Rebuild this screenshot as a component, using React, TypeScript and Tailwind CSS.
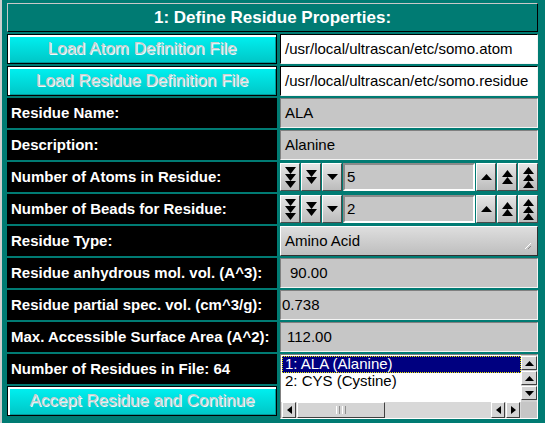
import React from 'react';

const font = { fontFamily: '"Liberation Sans", Arial, sans-serif' };

const Tri: React.FC<{ up?: boolean; w?: number; h?: number }> = ({ up, w = 10, h = 6 }) => (
  <svg width={w} height={h} className="block">
    <polygon points={up ? `0,${h} ${w / 2},0 ${w},${h}` : `0,0 ${w},0 ${w / 2},${h}`} fill="black" />
  </svg>
);

const SideTri: React.FC<{ left?: boolean }> = ({ left }) => (
  <svg width="5" height="8" className="block">
    <polygon points={left ? '5,0 0,4 5,8' : '0,0 5,4 0,8'} fill="black" />
  </svg>
);

const CyanButton: React.FC<{ label: string }> = ({ label }) => (
  <button className="h-full w-full border border-black bg-gradient-to-b from-[#00f2f2] to-[#00c6c6] shadow-[inset_2px_2px_0_#ffffff,inset_-1px_-1px_0_#009a9a] text-[17px] text-[#cdcdcd] [text-shadow:1px_1px_0_#e8ffff]">
    {label}
  </button>
);

const Label: React.FC<{ text: string }> = ({ text }) => (
  <div className="h-full bg-black flex items-center pl-[4px] text-white font-bold text-[15px]">{text}</div>
);

const Field: React.FC<{ value: string; pad?: string; white?: boolean }> = ({ value, pad = 'pl-[4px]', white }) => (
  <div
    className={`h-full flex items-center border-t border-l border-[#808080] border-b-[#f4f4f4] border-r-[#f4f4f4] border-b border-r text-[15px] text-black ${pad} ${
      white ? 'bg-white border-t-black border-l-black border-b-[#c8c8c8] border-r-[#c8c8c8]' : 'bg-[#c6c6c6]'
    }`}
  >
    {value}
  </div>
);

const SpinBtn: React.FC<{ n: number; up?: boolean }> = ({ n, up }) => (
  <div className="w-[20px] h-full flex flex-col items-center justify-center bg-gradient-to-b from-[#e6e6e6] to-[#bcbcbc] border-t border-l border-white border-b border-r border-b-[#4a4a4a] border-r-[#4a4a4a]">
    {Array.from({ length: n }).map((_, i) => (
      <Tri key={i} up={up} w={11} h={n === 1 ? 6 : 7} />
    ))}
  </div>
);

const Spin: React.FC<{ value: string }> = ({ value }) => (
  <div className="h-full flex gap-[1px] py-[1px]">
    <SpinBtn n={3} />
    <SpinBtn n={2} />
    <SpinBtn n={1} />
    <div className="flex-1 h-full flex items-center pl-[2px] bg-[#c6c6c6] border-t-2 border-l-2 border-[#8a8a8a] border-b-2 border-r-2 border-b-white border-r-white text-[15px]">
      {value}
    </div>
    <SpinBtn n={1} up />
    <SpinBtn n={2} up />
    <SpinBtn n={3} up />
  </div>
);

const SmallBtn: React.FC<{ children: React.ReactNode; className?: string }> = ({ children, className }) => (
  <div
    className={`flex items-center justify-center bg-[#d4d4d4] border-t border-l border-white border-b border-r border-b-[#404040] border-r-[#404040] ${className ?? ''}`}
  >
    {children}
  </div>
);

const ListBox: React.FC = () => (
  <div className="row-span-2 h-[65px] bg-[#c6c6c6] border border-[#808080] border-b-white border-r-white flex flex-col">
    <div className="flex flex-1 min-h-0">
      <div className="flex-1 bg-white pt-[1px] pl-[1px] text-[15px]">
        <div className="h-[17px] bg-[#000080] text-white pl-[3px] flex items-center outline outline-1 outline-dotted outline-[#e8e800] -outline-offset-1">
          1: ALA (Alanine)
        </div>
        <div className="h-[17px] text-black pl-[3px] flex items-center">2: CYS (Cystine)</div>
      </div>
      <div className="w-[16px] flex flex-col gap-[1px] py-[1px] bg-[#d0d0d0]">
        <SmallBtn className="h-[14px]">
          <Tri up w={9} h={5} />
        </SmallBtn>
        <SmallBtn className="h-[14px]">
          <Tri up w={9} h={5} />
        </SmallBtn>
        <SmallBtn className="h-[14px]">
          <Tri w={9} h={5} />
        </SmallBtn>
      </div>
    </div>
    <div className="h-[16px] flex bg-[#c8c8c8]">
      <div className="flex-1 flex gap-[1px] px-[1px] bg-[#d8d8d8]">
        <SmallBtn className="w-[14px]">
          <SideTri left />
        </SmallBtn>
        <div className="w-[88px] bg-[#d4d4d4] border-t border-l border-white border-b border-r border-b-[#404040] border-r-[#404040] flex items-center justify-center gap-[2px]">
          <span className="w-px h-[8px] bg-white" />
          <span className="w-px h-[8px] bg-[#909090]" />
          <span className="w-px h-[8px] bg-white" />
          <span className="w-px h-[8px] bg-[#909090]" />
        </div>
        <div className="flex-1" />
        <SmallBtn className="w-[14px]">
          <SideTri left />
        </SmallBtn>
        <SmallBtn className="w-[14px]">
          <SideTri />
        </SmallBtn>
      </div>
      <div className="w-[16px] bg-[#c6c6c6]" />
    </div>
  </div>
);

export default function App() {
  return (
    <div style={font} className="w-[545px] h-[423px] bg-[#007b73] border-l-2 border-[#cfcfcf] pl-[5px] pt-[3px] overflow-hidden">
      <div className="w-[531px] h-[29px] border-t border-l border-[#c8c8c8] border-b border-r border-b-black border-r-black flex items-center justify-center text-white font-bold text-[17px]">
        1: Define Residue Properties:
      </div>
      <div className="mt-[2px] grid grid-cols-[270px_258px] gap-x-[3px] gap-y-[2px] auto-rows-[30px]">
        <CyanButton label="Load Atom Definition File" />
        <Field value="/usr/local/ultrascan/etc/somo.atom" white />
        <CyanButton label="Load Residue Definition File" />
        <Field value="/usr/local/ultrascan/etc/somo.residue" white />

        <Label text="Residue Name:" />
        <Field value="ALA" />
        <Label text="Description:" />
        <Field value="Alanine" />

        <Label text="Number of Atoms in Residue:" />
        <Spin value="5" />
        <Label text="Number of Beads for Residue:" />
        <Spin value="2" />

        <Label text="Residue Type:" />
        <div className="h-full flex items-center justify-between pl-[4px] pr-[6px] bg-gradient-to-b from-[#dedede] to-[#bebebe] border-t border-l border-white border-b border-r border-b-[#303030] border-r-[#303030] text-[15px]">
          <span>Amino Acid</span>
          <svg width="6" height="6" className="mt-[10px]">
            <line x1="0" y1="6" x2="6" y2="0" stroke="#ffffff" strokeWidth="1" />
            <line x1="3" y1="6" x2="6" y2="3" stroke="#8a8a8a" strokeWidth="1" />
          </svg>
        </div>

        <Label text="Residue anhydrous mol. vol. (A^3):" />
        <Field value="90.00" pad="pl-[9px]" />
        <Label text="Residue partial spec. vol. (cm^3/g):" />
        <Field value="0.738" pad="pl-[1px]" />
        <Label text="Max. Accessible Surface Area (A^2):" />
        <Field value="112.00" pad="pl-[6px]" />

        <Label text="Number of Residues in File: 64" />
        <ListBox />
        <CyanButton label="Accept Residue and Continue" />
      </div>
    </div>
  );
}
